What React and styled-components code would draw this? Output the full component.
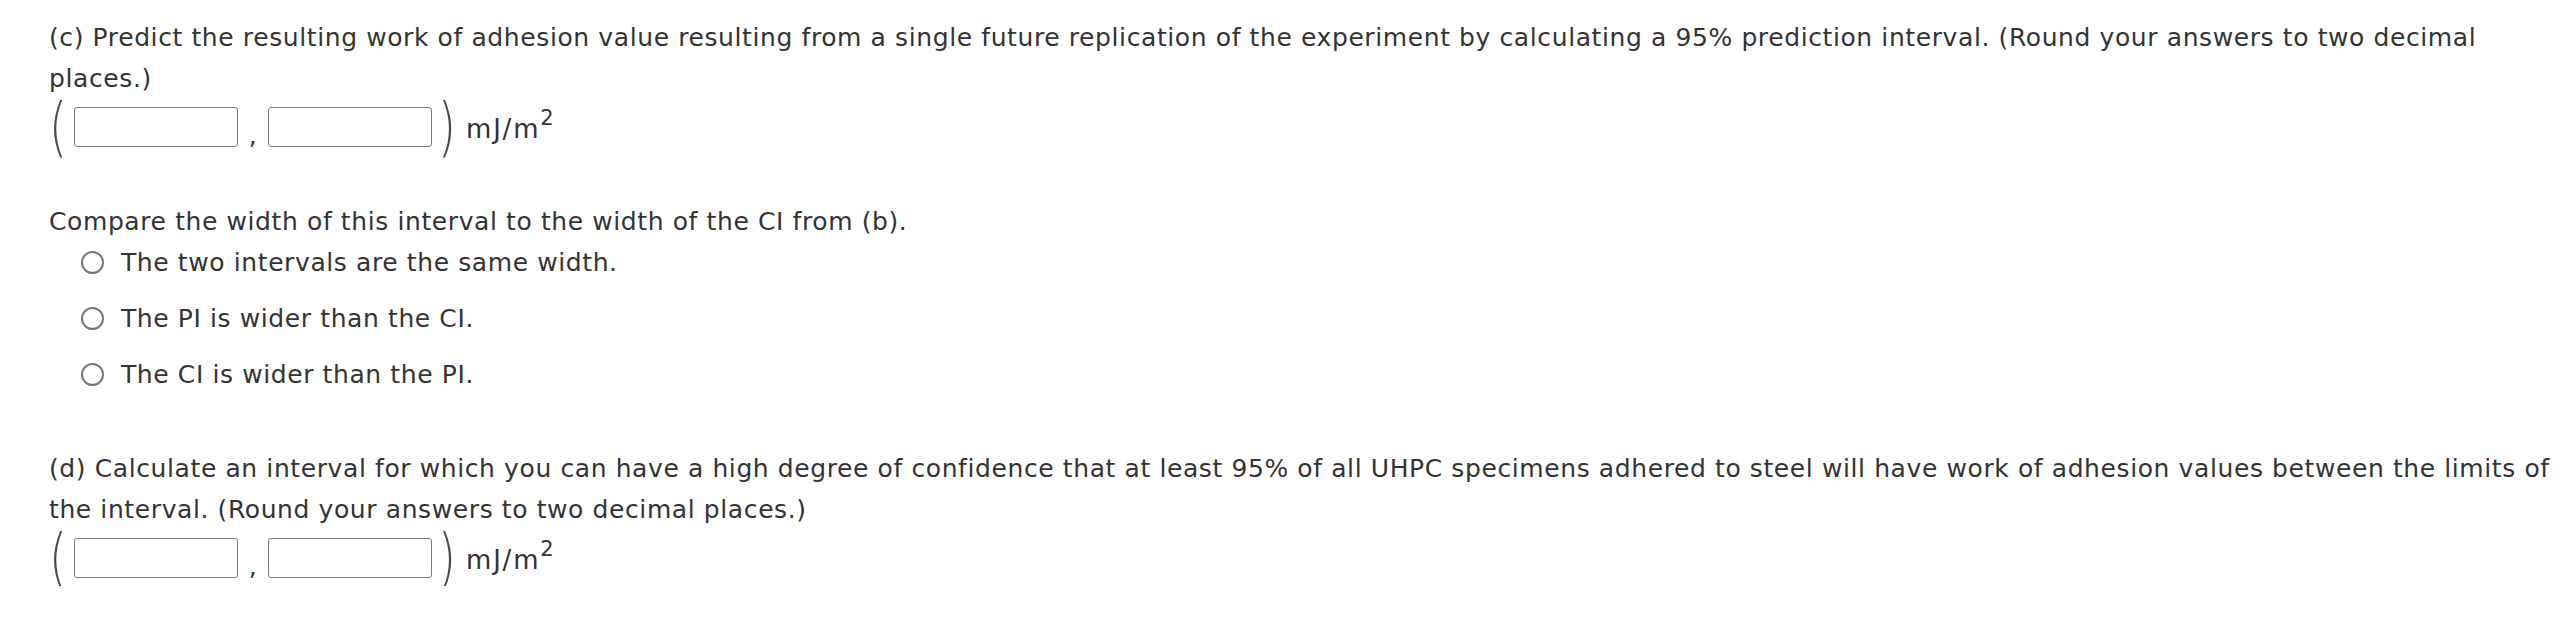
import React from "react";
import styled, { createGlobalStyle } from "styled-components";

const Global = createGlobalStyle`
  html, body { margin: 0; padding: 0; background: #ffffff; }
  body {
    font-family: "DejaVu Sans", Verdana, sans-serif;
    color: #333333;
  }
`;

const Page = styled.div`
  padding: 17px 0 0 49px;
  font-size: 25px;
  letter-spacing: 0.6px;
  line-height: 41px;
  white-space: nowrap;
`;

const Part = styled.section`
  margin-top: ${(p) => p.$gap || 0}px;
`;

const Prompt = styled.div`
  line-height: 41px;
`;

const AnswerRow = styled.div`
  display: flex;
  align-items: center;
  height: 56px;
`;

const Paren = styled.span`
  display: inline-block;
  font-family: "DejaVu Sans", sans-serif;
  font-weight: 200;
  font-size: 46px;
  line-height: 56px;
  letter-spacing: 0;
  color: #4a4a4a;
  transform: scaleY(1.4);
  width: ${(p) => p.$w}px;
  text-align: ${(p) => p.$align || "center"};
`;

const Box = styled.input`
  box-sizing: border-box;
  width: 164px;
  height: 40px;
  border: 1.6px solid #7a7a7a;
  border-radius: 3px;
  background: #fff;
  margin: 0;
  padding: 0 6px;
  font: inherit;
`;

const Comma = styled.span`
  display: inline-block;
  width: 30px;
  text-align: center;
  position: relative;
  top: 8px;
`;

const Unit = styled.span`
  margin-left: 4px;
  position: relative;
  top: 2px;
  font-size: 26px;
  letter-spacing: 1.8px;
`;

const Sup = styled.sup`
  font-size: 21px;
  position: relative;
  top: -3px;
  vertical-align: super;
  line-height: 0;
  letter-spacing: 0;
`;

const Choices = styled.div`
  display: flex;
  flex-direction: column;
  gap: 16px;
  padding-left: 32px;
`;

const Choice = styled.label`
  display: flex;
  align-items: center;
  height: 40px;
  gap: 17px;
`;

const RadioCircle = styled.span`
  box-sizing: border-box;
  width: 23px;
  height: 23px;
  border: 2px solid #777;
  border-radius: 50%;
  background: #fff;
  flex: none;
`;

function Interval() {
  return (
    <AnswerRow>
      <Paren $w={25} $align="left">(</Paren>
      <Box type="text" />
      <Comma>,</Comma>
      <Box type="text" />
      <Paren $w={30}>)</Paren>
      <Unit>
        mJ/m<Sup>2</Sup>
      </Unit>
    </AnswerRow>
  );
}

export default function App() {
  return (
    <>
      <Global />
      <Page>
        <Part>
          <Prompt>
            (c) Predict the resulting work of adhesion value resulting from a single future replication of the experiment by calculating a 95% prediction interval. (Round your answers to two decimal
            <br />
            places.)
          </Prompt>
          <Interval />
        </Part>

        <Part $gap={46}>
          <Prompt>Compare the width of this interval to the width of the CI from (b).</Prompt>
          <Choices>
            <Choice>
              <RadioCircle />
              The two intervals are the same width.
            </Choice>
            <Choice>
              <RadioCircle />
              The PI is wider than the CI.
            </Choice>
            <Choice>
              <RadioCircle />
              The CI is wider than the PI.
            </Choice>
          </Choices>
        </Part>

        <Part $gap={54}>
          <Prompt>
            (d) Calculate an interval for which you can have a high degree of confidence that at least 95% of all UHPC specimens adhered to steel will have work of adhesion values between the limits of
            <br />
            the interval. (Round your answers to two decimal places.)
          </Prompt>
          <Interval />
        </Part>
      </Page>
    </>
  );
}
